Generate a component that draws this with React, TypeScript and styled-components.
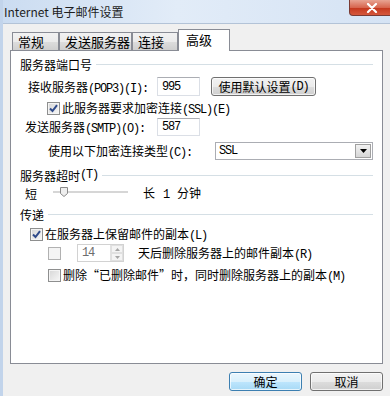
import styled, { createGlobalStyle } from "styled-components";

const GlobalStyle = createGlobalStyle`
	html, body {
		margin: 0;
		padding: 0;
		background: #f0f0f0;
	}
	body {
		font-family: "Noto Sans CJK SC", "Microsoft YaHei", sans-serif;
		font-size: 12px;
		color: #000;
	}
`;

const Window = styled.div`
	width: 390px;
	height: 396px;
	box-sizing: border-box;
	overflow: hidden;
	display: flex;
	flex-direction: column;
	background: #f0f0f0;
	border-left: 3px solid #c2d4eb;
`;

const TitleBar = styled.div`
	height: 24px;
	box-sizing: border-box;
	display: flex;
	align-items: flex-start;
	background: linear-gradient(90deg, #cbdcf1 0%, #e2ecf8 45%, #d5e3f4 100%);
	border-bottom: 1px solid #b3c3d7;
`;

const Title = styled.span`
	padding-left: 1px;
	line-height: 23px;
	font-size: 12px;
	color: #1e1e1e;
`;

const CloseButton = styled.div`
	margin-left: auto;
	margin-right: -4px;
	width: 43px;
	height: 15px;
	display: flex;
	align-items: center;
	justify-content: center;
	border: 1px solid #7a3a33;
	border-top: none;
	border-radius: 0 0 4px 4px;
	background: linear-gradient(#e8a493 0%, #d7664f 50%, #c5391f 55%, #d5583c 100%);
`;

const Client = styled.div`
	flex: 1;
	display: flex;
	flex-direction: column;
	padding: 5px 7px 0 7px;
`;

const TabStrip = styled.div`
	position: relative;
	z-index: 1;
	display: flex;
	align-items: flex-start;
	height: 22px;
	margin-bottom: -1px;
	padding-left: 2px;
`;

const Tab = styled.div<{ $w: number; $active?: boolean }>`
	width: ${(p) => p.$w}px;
	height: ${(p) => (p.$active ? 22 : 18)}px;
	margin-top: ${(p) => (p.$active ? 0 : 3)}px;
	box-sizing: border-box;
	padding-left: ${(p) => (p.$active ? 7 : 5)}px;
	line-height: ${(p) => (p.$active ? 19 : 17)}px;
	font-size: 13px;
	border: 1px solid #898c95;
	border-bottom: none;
	background: ${(p) =>
		p.$active
			? "#fff"
			: "linear-gradient(#f2f2f2 0%, #ebebeb 50%, #dddddd 51%, #cfcfcf 100%)"};
`;

const Panel = styled.div`
	height: 314px;
	box-sizing: border-box;
	border: 1px solid #898c95;
	background: #fff;
	display: flex;
	flex-direction: column;
	padding-right: 9px;
`;

const GroupHeader = styled.div<{ $mt: number }>`
	display: flex;
	align-items: center;
	height: 16px;
	margin-top: ${(p) => p.$mt}px;
	padding-left: 9px;
	white-space: nowrap;

	&::after {
		content: "";
		flex: 1;
		height: 1px;
		margin-left: 4px;
		background: #d5dfe5;
	}
`;

const Row = styled.div<{ $mt: number; $h?: number; $indent: number }>`
	display: flex;
	align-items: center;
	height: ${(p) => p.$h ?? 16}px;
	margin-top: ${(p) => p.$mt}px;
	padding-left: ${(p) => p.$indent}px;
	white-space: nowrap;
`;

const Label = styled.span<{ $w?: number }>`
	display: inline-block;
	width: ${(p) => (p.$w ? `${p.$w}px` : "auto")};
	flex-shrink: 0;
`;

const Ascii = styled.span<{ $muted?: boolean }>`
	font-family: "Liberation Mono", "Courier New", monospace;
	font-size: 12px;
	letter-spacing: -1.2px;
	color: ${(p) => (p.$muted ? "#6d6d6d" : "inherit")};
`;

const Minutes = styled(Ascii)`
	margin: 0 8px;
`;

const TextBox = styled.div<{ $w: number; $h: number }>`
	width: ${(p) => p.$w}px;
	height: ${(p) => p.$h}px;
	box-sizing: border-box;
	display: flex;
	align-items: center;
	padding-left: 4px;
	border: 1px solid #dbdfe6;
	border-top-color: #abadb3;
	background: #fff;
	flex-shrink: 0;
`;

const PushButton = styled.div<{ $w: number; $default?: boolean }>`
	width: ${(p) => p.$w}px;
	height: 19px;
	box-sizing: border-box;
	display: flex;
	align-items: center;
	justify-content: center;
	border: 1px solid ${(p) => (p.$default ? "#3c7fb1" : "#707070")};
	border-radius: 3px;
	background: ${(p) =>
		p.$default
			? "linear-gradient(#eaf6fd 0%, #d9f0fc 50%, #bee6fd 51%, #a7d9f5 100%)"
			: "linear-gradient(#f2f2f2 0%, #ebebeb 50%, #dddddd 51%, #cfcfcf 100%)"};
	box-shadow: inset 0 0 0 1px rgba(255, 255, 255, 0.7);
	flex-shrink: 0;
`;

const DefaultsButton = styled(PushButton)`
	margin-left: 11px;
`;

const Box = styled.span<{ $disabled?: boolean }>`
	width: 13px;
	height: 13px;
	box-sizing: border-box;
	flex-shrink: 0;
	display: flex;
	align-items: center;
	justify-content: center;
	border: 1px solid ${(p) => (p.$disabled ? "#b1b1b1" : "#8e8f8f")};
	background: ${(p) =>
		p.$disabled ? "#f4f4f4" : "linear-gradient(135deg, #d6d6d6 0%, #f7f7f7 100%)"};
	box-shadow: inset 0 0 0 1px #f4f4f4;
	margin-right: 2px;
`;

function CheckBox({ checked, disabled }: { checked?: boolean; disabled?: boolean }) {
	return (
		<Box $disabled={disabled}>
			{checked && (
				<svg width="9" height="9" viewBox="0 0 9 9">
					<path
						d="M1 4.5 L3.5 7 L8 1.2"
						fill="none"
						stroke="#2f4a8a"
						strokeWidth="2"
					/>
				</svg>
			)}
		</Box>
	);
}

const Combo = styled.div`
	width: 159px;
	height: 18px;
	box-sizing: border-box;
	display: flex;
	align-items: center;
	padding-left: 3px;
	border: 1px solid #abadb3;
	background: #fff;
`;

const ComboArrow = styled.span`
	margin-left: auto;
	margin-right: 1px;
	width: 16px;
	height: 14px;
	box-sizing: border-box;
	display: flex;
	align-items: center;
	justify-content: center;
	border: 1px solid #a0a0a0;
	background: linear-gradient(#f2f2f2, #d6d6d6);
`;

const Spinner = styled.div`
	width: 47px;
	height: 18px;
	box-sizing: border-box;
	display: flex;
	border: 1px solid #d2d2d2;
	background: #fff;
	margin-left: 14px;
`;

const SpinValue = styled.span`
	flex: 1;
	padding-left: 4px;
	display: flex;
	align-items: center;
`;

const SpinButtons = styled.span`
	width: 12px;
	display: flex;
	flex-direction: column;
	border-left: 1px solid #e2e2e2;
`;

const SpinButton = styled.span`
	flex: 1;
	display: flex;
	align-items: center;
	justify-content: center;
	background: #f4f4f4;
	border: 1px solid #e0e0e0;
`;

const DaysLabel = styled(Label)`
	margin-left: 14px;
`;

const Track = styled.div`
	position: relative;
	width: 75px;
	height: 2px;
	margin: 0 15px 2px 16px;
	background: #d6d6d6;
	border-bottom: 1px solid #fff;
`;

const Thumb = styled.svg`
	position: absolute;
	left: 7px;
	top: -4px;
`;

const Footer = styled.div`
	display: flex;
	justify-content: flex-end;
	gap: 8px;
	margin-top: 8px;
`;

export default function App() {
	return (
		<>
			<GlobalStyle />
			<Window>
				<TitleBar>
					<Title>Internet 电子邮件设置</Title>
					<CloseButton>
						<svg width="12" height="10" viewBox="0 0 12 10">
							<path
								d="M2 1 L10 9 M10 1 L2 9"
								stroke="#fff"
								strokeWidth="2.2"
								strokeLinecap="round"
							/>
						</svg>
					</CloseButton>
				</TitleBar>
				<Client>
					<TabStrip>
						<Tab $w={47}>常规</Tab>
						<Tab $w={73}>发送服务器</Tab>
						<Tab $w={46}>连接</Tab>
						<Tab $w={52} $active>
							高级
						</Tab>
					</TabStrip>
					<Panel>
						<GroupHeader $mt={5}>服务器端口号</GroupHeader>
						<Row $mt={5} $h={19} $indent={17}>
							<Label $w={129}>
								接收服务器<Ascii>(POP3)(I):</Ascii>
							</Label>
							<TextBox $w={43} $h={19}>
								<Ascii>995</Ascii>
							</TextBox>
							<DefaultsButton $w={105}>
								使用默认设置<Ascii>(D)</Ascii>
							</DefaultsButton>
						</Row>
						<Row $mt={4} $indent={36}>
							<CheckBox checked />
							<Label>
								此服务器要求加密连接<Ascii>(SSL)(E)</Ascii>
							</Label>
						</Row>
						<Row $mt={2} $h={18} $indent={14}>
							<Label $w={132}>
								发送服务器<Ascii>(SMTP)(O):</Ascii>
							</Label>
							<TextBox $w={43} $h={18}>
								<Ascii>587</Ascii>
							</TextBox>
						</Row>
						<Row $mt={6} $h={18} $indent={37}>
							<Label $w={167}>
								使用以下加密连接类型<Ascii>(C):</Ascii>
							</Label>
							<Combo>
								<Ascii>SSL</Ascii>
								<ComboArrow>
									<svg width="7" height="4" viewBox="0 0 7 4">
										<path d="M0 0 H7 L3.5 4 Z" fill="#000" />
									</svg>
								</ComboArrow>
							</Combo>
						</Row>
						<GroupHeader $mt={7}>
							服务器超时<Ascii>(T)</Ascii>
						</GroupHeader>
						<Row $mt={2} $indent={14}>
							<Label>短</Label>
							<Track>
								<Thumb width="8" height="10" viewBox="0 0 8 10">
									<path
										d="M0.5 0.5 H7.5 V6.5 L4 9.5 L0.5 6.5 Z"
										fill="#eeeeee"
										stroke="#8a8a8a"
									/>
								</Thumb>
							</Track>
							<Label>
								长<Minutes>1</Minutes>分钟
							</Label>
						</Row>
						<GroupHeader $mt={5}>传递</GroupHeader>
						<Row $mt={4} $indent={19}>
							<CheckBox checked />
							<Label>
								在服务器上保留邮件的副本<Ascii>(L)</Ascii>
							</Label>
						</Row>
						<Row $mt={2} $h={18} $indent={37}>
							<CheckBox disabled />
							<Spinner>
								<SpinValue>
									<Ascii $muted>14</Ascii>
								</SpinValue>
								<SpinButtons>
									<SpinButton>
										<svg width="5" height="3" viewBox="0 0 5 3">
											<path d="M0 3 L2.5 0 L5 3 Z" fill="#a6a6a6" />
										</svg>
									</SpinButton>
									<SpinButton>
										<svg width="5" height="3" viewBox="0 0 5 3">
											<path d="M0 0 L2.5 3 L5 0 Z" fill="#a6a6a6" />
										</svg>
									</SpinButton>
								</SpinButtons>
							</Spinner>
							<DaysLabel>
								天后删除服务器上的邮件副本<Ascii>(R)</Ascii>
							</DaysLabel>
						</Row>
						<Row $mt={5} $indent={37}>
							<CheckBox />
							<Label>
								删除“已删除邮件”时，同时删除服务器上的副本<Ascii>(M)</Ascii>
							</Label>
						</Row>
					</Panel>
					<Footer>
						<PushButton $w={73} $default>
							确定
						</PushButton>
						<PushButton $w={73}>取消</PushButton>
					</Footer>
				</Client>
			</Window>
		</>
	);
}
